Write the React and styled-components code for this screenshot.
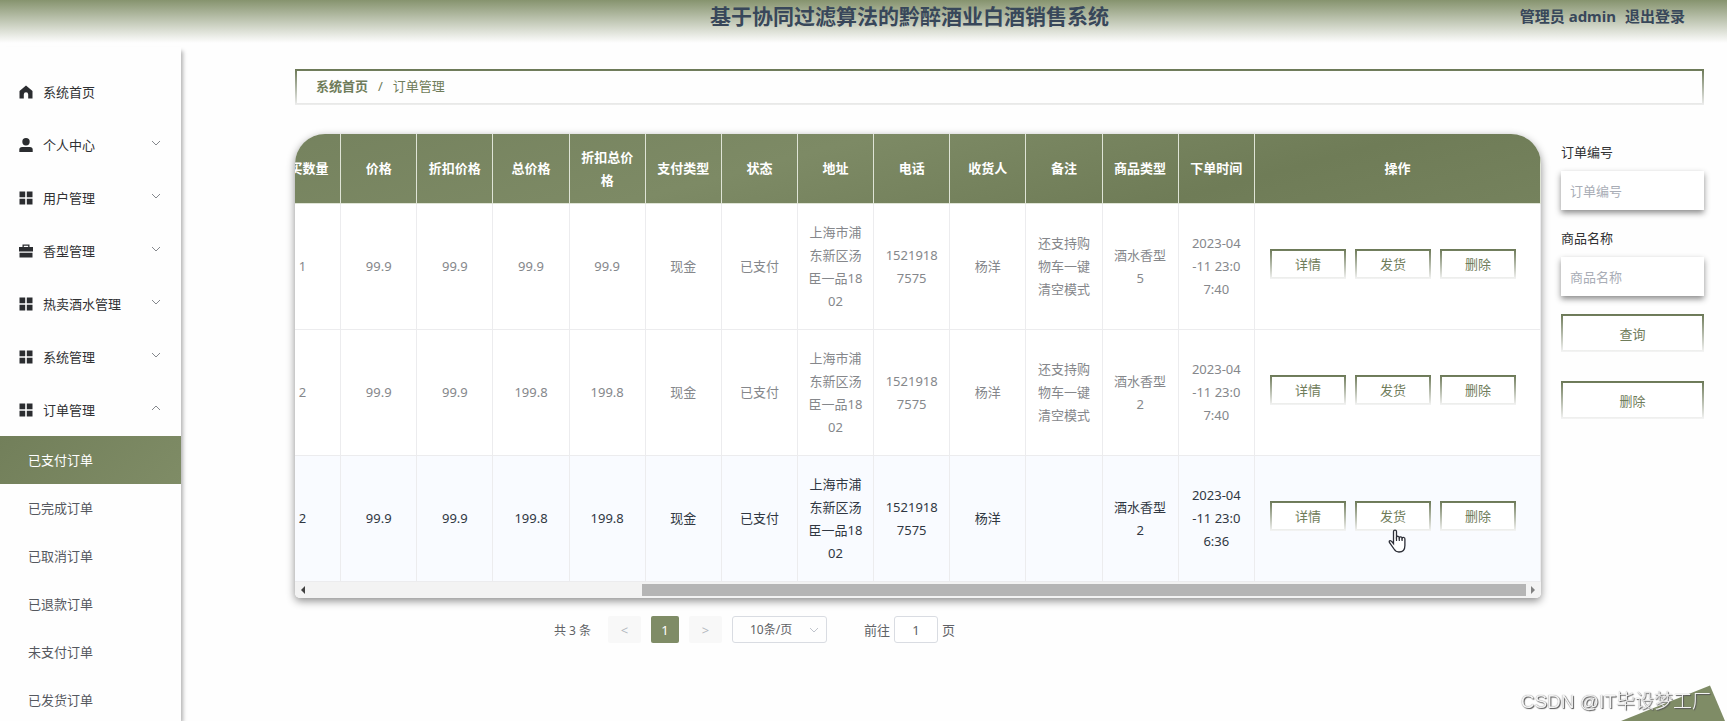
import React, { useState } from 'react';
import styled, { createGlobalStyle } from 'styled-components';

const GlobalStyle = createGlobalStyle`
  * {
    box-sizing: border-box;
  }

  body {
    margin: 0;
    background: #fefefe;
    color: #303133;
    font-family: 'Noto Sans', 'Noto Sans CJK SC', sans-serif;
    font-size: 13px;
  }

  button, input, select {
    font-family: inherit;
    font-size: 13px;
  }
`;

const Page = styled.div`
  display: flex;
  flex-direction: column;
  height: 100vh;
  overflow: hidden;
`;

const Header = styled.header`
  display: grid;
  grid-template-columns: 1fr auto 1fr;
  flex: none;
  height: 43px;
  padding: 0 42px 0 134px;
  line-height: 32px;
  color: #38475a;
  font-weight: bold;
  background: linear-gradient(to bottom, #86936e, #fefefe);
`;

const Title = styled.h1`
  grid-column: 2;
  margin: 0;
  font-size: 21px;
`;

const UserBar = styled.div`
  display: flex;
  justify-content: flex-end;
  gap: 9px;
  font-size: 15px;
`;

const HeaderLink = styled.a`
  color: inherit;
  text-decoration: none;
`;

const Body = styled.div`
  display: flex;
  flex: 1;
  min-height: 0;
`;

const Sidebar = styled.nav`
  flex: none;
  width: 181px;
  margin-top: 4px;
  padding-top: 18px;
  box-shadow: 3px 3px 4px -1px rgba(0, 0, 0, 0.3);
`;

const MenuItem = styled.button`
  display: flex;
  align-items: center;
  width: 100%;
  height: 53px;
  padding: 0 20px 0 19px;
  border: none;
  background: none;
  color: #303133;
  text-align: left;
  cursor: pointer;
`;

const MenuIcon = styled.svg`
  width: 14px;
  height: 14px;
  margin-right: 10px;
  fill: #2b2d30;
`;

const Chevron = styled.svg`
  width: 10px;
  height: 6px;
  margin: 0 0 4px auto;
  fill: none;
  stroke: #85888d;
`;

const SubItem = styled.a`
  display: block;
  height: 48px;
  padding-left: 28px;
  line-height: 48px;
  text-decoration: none;
  color: ${(props) => (props.$active ? '#fff' : '#55585e')};
  background: ${(props) => (props.$active ? 'linear-gradient(135deg, #727f5a, #7f8c66)' : 'none')};
`;

const Main = styled.main`
  flex: 1;
  min-width: 0;
  padding: 26px 23px 0 114px;
`;

const Breadcrumb = styled.div`
  display: flex;
  gap: 10px;
  height: 36px;
  padding: 0 19px;
  line-height: 31px;
  color: #6f7c5a;
  border: 2px solid;
  border-image: linear-gradient(to bottom, #6b7856, #eee) 2;
`;

const Crumb = styled.a`
  color: inherit;
  font-weight: bold;
  text-decoration: none;
`;

const Content = styled.div`
  display: flex;
  align-items: flex-start;
  gap: 20px;
  margin-top: 29px;
`;

const TableColumn = styled.section`
  flex: 1;
  min-width: 0;
`;

const TableCard = styled.div`
  overflow: hidden;
  border-radius: 30px 30px 5px 5px;
  background: #fff;
  box-shadow: 0 3px 8px rgba(0, 0, 0, 0.45);
`;

const Scroller = styled.div`
  display: flex;
  justify-content: flex-end;
  overflow: hidden;
`;

const Table = styled.table`
  flex: none;
  width: calc(100% + 30px);
  table-layout: fixed;
  border-collapse: separate;
  border-spacing: 0;
  line-height: 23px;
  text-align: center;
  white-space: pre-line;
`;

const HeadRow = styled.tr`
  background: linear-gradient(165deg, #75825e, #7d8a65 40%, #6f7c57 75%, #75825d);
`;

const Th = styled.th`
  width: ${(props) => props.$width || 'auto'};
  height: 70px;
  padding: 0;
  color: #fff;
  border-right: 1px solid #dfe4d6;
  border-bottom: 1px solid #dfe4d6;
`;

const Row = styled.tr`
  color: ${(props) => (props.$hover ? '#303742' : '#85878b')};
  background: ${(props) => (props.$hover ? '#f9fbff' : '#fff')};
`;

const Td = styled.td`
  height: 126px;
  padding: 0;
  border-right: 1px solid #ececee;
  border-bottom: 1px solid #ececee;
`;

const Actions = styled.div`
  display: flex;
  gap: 9px;
  padding: 0 0 6px 15px;
`;

const OutlineButton = styled.button`
  width: ${(props) => (props.$block ? '100%' : '76px')};
  height: ${(props) => (props.$block ? '38px' : '30px')};
  padding: 0;
  color: #6f7c5a;
  background: #fff;
  border: 2px solid;
  border-image: linear-gradient(to bottom, #6b7856, #f4f4f4) 2;
  cursor: pointer;
`;

const Scrollbar = styled.div`
  display: flex;
  align-items: center;
  height: 16px;
  padding: 0 6px;
  background: #f3f3f3;
`;

const Track = styled.div`
  display: flex;
  justify-content: flex-end;
  flex: 1;
  margin: 0 5px;
`;

const Thumb = styled.div`
  width: calc(72% + 8px);
  height: 12px;
  background: #b5b5b5;
`;

const Arrow = styled.svg`
  width: 4px;
  height: 8px;
  fill: ${(props) => props.$color};
`;

const Pagination = styled.div`
  display: flex;
  align-items: center;
  margin-top: 18px;
  padding-left: 259px;
  color: #606266;
  font-size: 12px;
`;

const PageButton = styled.button`
  width: ${(props) => (props.$active ? '28px' : '33px')};
  height: 27px;
  margin-right: 10px;
  padding: 0;
  border: none;
  border-radius: 2px;
  color: ${(props) => (props.$active ? '#fff' : '#b4b8bf')};
  background: ${(props) => (props.$active ? '#7f8c66' : '#f8f8f8')};
`;

const Total = styled.span`
  width: 54px;
  white-space: nowrap;
`;

const SizeBox = styled.div`
  display: flex;
  align-items: center;
  width: 95px;
  height: 27px;
  margin-right: 37px;
  padding-right: 7px;
  border: 1px solid #d9dce2;
  border-radius: 3px;

  svg {
    margin-bottom: 0;
    stroke: #c0c4cc;
  }
`;

const SizeSelect = styled.select`
  flex: 1;
  padding: 0 0 0 17px;
  border: none;
  appearance: none;
  background: none;
  color: #606266;
  font-size: 12px;
`;

const JumpLabel = styled.label`
  display: flex;
  align-items: center;
  gap: 4px;
  font-size: 13px;
`;

const JumpInput = styled.input`
  width: 44px;
  height: 27px;
  padding: 0;
  border: 1px solid #d9dce2;
  border-radius: 3px;
  color: #606266;
  text-align: center;
`;

const SearchForm = styled.form`
  flex: none;
  width: 143px;
  padding-top: 8px;
`;

const FieldLabel = styled.label`
  display: block;
  line-height: 20px;
`;

const Field = styled.input`
  display: block;
  width: 100%;
  height: 39px;
  margin: 9px 0 18px;
  padding: 0 9px;
  border: none;
  background: #fff;
  box-shadow: 0 3px 6px rgba(0, 0, 0, 0.45);

  &::placeholder {
    color: #a9adb6;
  }
`;

const FormActions = styled.div`
  display: grid;
  gap: 29px;
`;

const Corner = styled.svg`
  position: fixed;
  right: 2px;
  bottom: 0;
  width: 104px;
  height: 36px;
  fill: #7f8c66;
`;

const Watermark = styled.div`
  position: fixed;
  right: 16px;
  bottom: 4px;
  color: #f4f4f4;
  font-size: 19px;
  font-weight: 300;
  line-height: 30px;
  font-family: 'Liberation Sans', 'Noto Sans CJK SC', sans-serif;
  text-shadow: 1px 1px 1px #555, 0 0 1px #777;
`;

const ButtonSlot = styled.div`
  position: relative;
`;

const Pointer = styled.svg`
  position: absolute;
  top: 28px;
  left: 33px;
  width: 18px;
  height: 24px;
`;

const icons = {
  home: 'M7 0.5 L0.5 6 V13.5 H4.8 V9.5 a2.2 2.2 0 0 1 4.4 0 V13.5 H13.5 V6 Z',
  user: 'M7 0 a3.6 3.6 0 1 1 0 7.4 a3.6 3.6 0 0 1 0 -7.4 Z M0.3 14 V11.6 Q0.3 9 3.2 9 H10.8 Q13.7 9 13.7 11.6 V14 Z',
  grid: 'M0.5 0.5 H6.2 V6.2 H0.5 Z M7.8 0.5 H13.5 V6.2 H7.8 Z M0.5 7.8 H6.2 V13.5 H0.5 Z M7.8 7.8 H13.5 V13.5 H7.8 Z',
  box: 'M3.5 0.5 H10.5 V3 H14 V7.5 H0 V3 H3.5 Z M4.8 1.8 V3 H9.2 V1.8 Z M0.5 8.8 H13.5 V13.5 H0.5 Z',
};

const menus = [
  { label: '系统首页', icon: 'home' },
  { label: '个人中心', icon: 'user', arrow: true },
  { label: '用户管理', icon: 'grid', arrow: true },
  { label: '香型管理', icon: 'box', arrow: true },
  { label: '热卖酒水管理', icon: 'grid', arrow: true },
  { label: '系统管理', icon: 'grid', arrow: true },
  { label: '订单管理', icon: 'grid', arrow: true, open: true },
];

const subMenus = ['已支付订单', '已完成订单', '已取消订单', '已退款订单', '未支付订单', '已发货订单'];

const columns = [
  '购买数量', '价格', '折扣价格', '总价格', '折扣总价\n格', '支付类型', '状态',
  '地址', '电话', '收货人', '备注', '商品类型', '下单时间',
];

const address = '上海市浦\n东新区汤\n臣一品18\n02';
const phone = '1521918\n7575';
const remark = '还支持购\n物车一键\n清空模式';

const orders = [
  ['1', '99.9', '99.9', '99.9', '99.9', '现金', '已支付', address, phone, '杨洋', remark, '酒水香型\n5', '2023-04\n-11 23:0\n7:40'],
  ['2', '99.9', '99.9', '199.8', '199.8', '现金', '已支付', address, phone, '杨洋', remark, '酒水香型\n2', '2023-04\n-11 23:0\n7:40'],
  ['2', '99.9', '99.9', '199.8', '199.8', '现金', '已支付', address, phone, '杨洋', '', '酒水香型\n2', '2023-04\n-11 23:0\n6:36'],
];

const ChevronIcon = ({ up }) => (
  <Chevron viewBox="0 0 10 6">
    <path d={up ? 'M1 5 L5 1 L9 5' : 'M1 1 L5 5 L9 1'} />
  </Chevron>
);

const HandPointer = () => (
  <Pointer viewBox="0 0 18 24">
    <path
      d="M5.5 14.5 V2.6 a1.5 1.5 0 0 1 3 0 V8 a1.5 1.5 0 0 1 2.8 0.6 a1.5 1.5 0 0 1 2.8 0.6 a1.5 1.5 0 0 1 2.8 0.9 V16.5 Q16.9 23 11 23 Q7.8 23 6 20 L1.4 13.4 Q0.8 11.8 2.3 11.6 Q3.2 11.5 5.5 14.5 Z"
      fill="#fff"
      stroke="#2b2d36"
      strokeWidth="1.3"
    />
    <path d="M8.5 8 V12 M11.3 8.6 V12 M14.1 9.2 V12" stroke="#2b2d36" strokeWidth="1.2" />
  </Pointer>
);

const App = () => {
  const [current, setCurrent] = useState('已支付订单');
  const [page, setPage] = useState('1');

  return (
    <Page>
      <GlobalStyle />
      <Header>
        <Title>基于协同过滤算法的黔醉酒业白酒销售系统</Title>
        <UserBar>
          <span>管理员 admin</span>
          <HeaderLink href="#logout">退出登录</HeaderLink>
        </UserBar>
      </Header>
      <Body>
        <Sidebar>
          {menus.map((item) => (
            <MenuItem type="button" key={item.label}>
              <MenuIcon viewBox="0 0 14 14">
                <path fillRule="evenodd" d={icons[item.icon]} />
              </MenuIcon>
              {item.label}
              {item.arrow && <ChevronIcon up={item.open} />}
            </MenuItem>
          ))}
          {subMenus.map((label) => (
            <SubItem href="#orders" key={label} $active={label === current} onClick={() => setCurrent(label)}>
              {label}
            </SubItem>
          ))}
        </Sidebar>
        <Main>
          <Breadcrumb>
            <Crumb href="#home">系统首页</Crumb>
            <span>/</span>
            <span>订单管理</span>
          </Breadcrumb>
          <Content>
            <TableColumn>
              <TableCard>
                <Scroller>
                  <Table>
                    <thead>
                      <HeadRow>
                        {columns.map((name) => (
                          <Th key={name}>{name}</Th>
                        ))}
                        <Th $width="286px">操作</Th>
                      </HeadRow>
                    </thead>
                    <tbody>
                      {orders.map((order, i) => (
                        <Row key={i} $hover={i === 2}>
                          {order.map((value, j) => (
                            <Td key={j}>{value}</Td>
                          ))}
                          <Td>
                            <Actions>
                              <OutlineButton type="button">详情</OutlineButton>
                              <ButtonSlot>
                                <OutlineButton type="button">发货</OutlineButton>
                                {i === 2 && <HandPointer />}
                              </ButtonSlot>
                              <OutlineButton type="button">删除</OutlineButton>
                            </Actions>
                          </Td>
                        </Row>
                      ))}
                    </tbody>
                  </Table>
                </Scroller>
                <Scrollbar>
                  <Arrow viewBox="0 0 4 8" $color="#404040">
                    <path d="M4 0 V8 L0 4 Z" />
                  </Arrow>
                  <Track>
                    <Thumb />
                  </Track>
                  <Arrow viewBox="0 0 4 8" $color="#808080">
                    <path d="M0 0 V8 L4 4 Z" />
                  </Arrow>
                </Scrollbar>
              </TableCard>
              <Pagination>
                <Total>共 3 条</Total>
                <PageButton type="button">&lt;</PageButton>
                <PageButton type="button" $active>1</PageButton>
                <PageButton type="button">&gt;</PageButton>
                <SizeBox>
                  <SizeSelect aria-label="每页条数">
                    <option>10条/页</option>
                  </SizeSelect>
                  <ChevronIcon />
                </SizeBox>
                <JumpLabel>
                  前往
                  <JumpInput type="text" value={page} onChange={(e) => setPage(e.target.value)} />
                  页
                </JumpLabel>
              </Pagination>
            </TableColumn>
            <SearchForm onSubmit={(e) => e.preventDefault()}>
              <FieldLabel htmlFor="orderNo">订单编号</FieldLabel>
              <Field id="orderNo" type="text" placeholder="订单编号" />
              <FieldLabel htmlFor="goodsName">商品名称</FieldLabel>
              <Field id="goodsName" type="text" placeholder="商品名称" />
              <FormActions>
                <OutlineButton type="submit" $block>查询</OutlineButton>
                <OutlineButton type="button" $block>删除</OutlineButton>
              </FormActions>
            </SearchForm>
          </Content>
        </Main>
      </Body>
      <Corner viewBox="0 0 104 36">
        <path d="M0 36 L89 0.5 L104 36 Z" />
      </Corner>
      <Watermark>CSDN @IT毕设梦工厂</Watermark>
    </Page>
  );
};

export default App;
